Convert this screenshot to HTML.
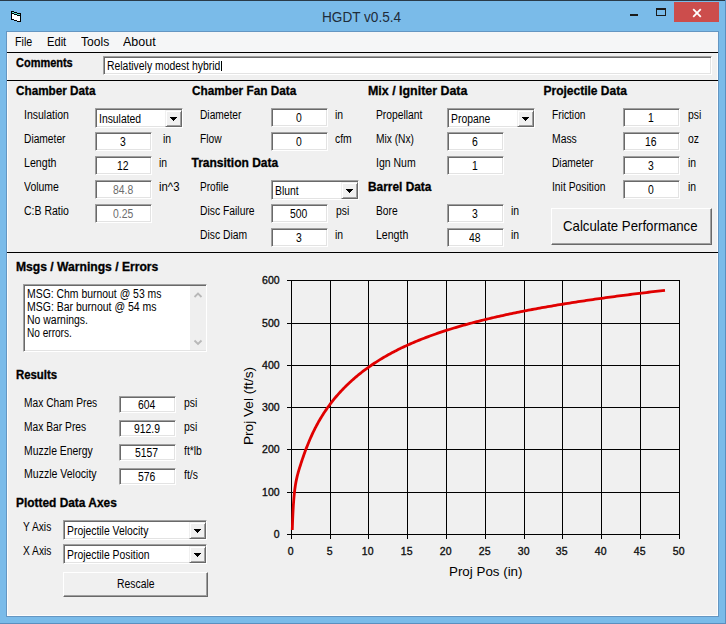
<!DOCTYPE html><html><head><meta charset="utf-8"><style>
html,body{margin:0;padding:0;width:726px;height:624px;overflow:hidden;background:#7abbe9}
body{position:relative;font-family:"Liberation Sans", sans-serif}
.t{position:absolute;white-space:pre;transform-origin:0 0}
.tb{position:absolute;box-sizing:border-box;border:1px solid;border-color:#a0a0a0 #fff #fff #a0a0a0;box-shadow:inset 1px 1px #696969,inset -1px -1px #e3e3e3;background:#fff}
.btn{position:absolute;box-sizing:border-box;border:1px solid;border-color:#f0f0f0 #696969 #696969 #f0f0f0;box-shadow:inset 1px 1px #fff,inset -1px -1px #a0a0a0;background:#f0f0f0}
.btn2{position:absolute;box-sizing:border-box;border:1px solid;border-color:#fff #696969 #696969 #fff;box-shadow:inset -1px -1px #a0a0a0;background:#f0f0f0}
</style></head><body><div style="position:absolute;left:0;top:0;width:726px;height:624px;background:#7abbe9"></div>
<div style="position:absolute;left:0;top:0;width:726px;height:1px;background:#2a3a48"></div>
<div style="position:absolute;left:0;top:623px;width:726px;height:1px;background:#5a8fbf"></div>
<div style="position:absolute;left:725px;top:0;width:1px;height:624px;background:#5a8fbf"></div>
<div style="position:absolute;left:674px;top:2px;width:45px;height:20px;background:#cc4d4c"></div>
<svg style="position:absolute;left:0;top:0" width="726" height="40"><path d="M693.2 9.2 L700.8 16.8 M700.8 9.2 L693.2 16.8" stroke="#fff" stroke-width="1.8"/><rect x="630" y="14" width="8" height="2" fill="#1b1b1b"/><rect x="656.5" y="8.5" width="9" height="7" fill="none" stroke="#1b1b1b" stroke-width="1"/><rect x="656" y="8" width="10" height="2" fill="#1b1b1b"/><path d="M11 11 H14 V12 H17 V13 H21 V22 H17 V21 H14 V20 H11 Z" fill="#000"/><path d="M12 14 H14 V15 H17 V16 H20 V21 H17 V20 H14 V19 H12 Z" fill="#fff"/><path d="M12 12 H14 V13 H17 V14 H20 V15 H17 V14 H14 V13 H12 Z" fill="#5fe0d0"/></svg>
<div style="position:absolute;left:6px;top:31px;width:713px;height:586px;background:#6496c2"></div>
<div style="position:absolute;left:7px;top:32px;width:711px;height:584px;background:#fdfdfd"></div>
<div style="position:absolute;left:8px;top:32px;width:709px;height:583px;background:#f0f0f0"></div>
<div style="position:absolute;left:7px;top:32px;width:711px;height:20px;background:#f5f6f7"></div>
<div style="position:absolute;left:7px;top:52px;width:711px;height:1px;background:#000"></div>
<div style="position:absolute;left:7px;top:80px;width:711px;height:1px;background:#000"></div>
<div style="position:absolute;left:7px;top:252px;width:711px;height:1px;background:#000"></div>
<div class="tb" style="left:103px;top:56px;width:609px;height:19px;background:#fff"></div>
<div style="position:absolute;left:221px;top:61px;width:1px;height:10px;background:#000"></div>
<div class="tb" style="left:95px;top:132px;width:57px;height:19px;background:#fff"></div>
<div class="tb" style="left:95px;top:156px;width:57px;height:19px;background:#fff"></div>
<div class="tb" style="left:95px;top:180px;width:57px;height:19px;background:#fff"></div>
<div class="tb" style="left:95px;top:204px;width:57px;height:19px;background:#fff"></div>
<div class="tb" style="left:271px;top:108px;width:57px;height:19px;background:#fff"></div>
<div class="tb" style="left:271px;top:132px;width:57px;height:19px;background:#fff"></div>
<div class="tb" style="left:271px;top:204px;width:57px;height:19px;background:#fff"></div>
<div class="tb" style="left:271px;top:228px;width:57px;height:19px;background:#fff"></div>
<div class="tb" style="left:447px;top:132px;width:57px;height:19px;background:#fff"></div>
<div class="tb" style="left:447px;top:156px;width:57px;height:19px;background:#fff"></div>
<div class="tb" style="left:447px;top:204px;width:57px;height:19px;background:#fff"></div>
<div class="tb" style="left:447px;top:228px;width:57px;height:19px;background:#fff"></div>
<div class="tb" style="left:623px;top:108px;width:57px;height:19px;background:#fff"></div>
<div class="tb" style="left:623px;top:132px;width:57px;height:19px;background:#fff"></div>
<div class="tb" style="left:623px;top:156px;width:57px;height:19px;background:#fff"></div>
<div class="tb" style="left:623px;top:180px;width:57px;height:19px;background:#fff"></div>
<div class="tb" style="left:119px;top:396px;width:57px;height:17px;background:#fff"></div>
<div class="tb" style="left:119px;top:420px;width:57px;height:17px;background:#fff"></div>
<div class="tb" style="left:119px;top:444px;width:57px;height:17px;background:#fff"></div>
<div class="tb" style="left:119px;top:468px;width:57px;height:17px;background:#fff"></div>
<div class="tb" style="left:95px;top:108px;width:88px;height:20px"></div>
<div class="btn" style="left:165px;top:110px;width:17px;height:17px"></div>
<svg style="position:absolute;left:165px;top:110px" width="17" height="17"><path d="M5 7 H12 V8 H11 V9 H10 V10 H9 V11 H8 V10 H7 V9 H6 V8 H5 Z" fill="#000"/></svg>
<div class="tb" style="left:271px;top:180px;width:88px;height:20px"></div>
<div class="btn" style="left:341px;top:182px;width:17px;height:17px"></div>
<svg style="position:absolute;left:341px;top:182px" width="17" height="17"><path d="M5 7 H12 V8 H11 V9 H10 V10 H9 V11 H8 V10 H7 V9 H6 V8 H5 Z" fill="#000"/></svg>
<div class="tb" style="left:447px;top:108px;width:88px;height:20px"></div>
<div class="btn" style="left:517px;top:110px;width:17px;height:17px"></div>
<svg style="position:absolute;left:517px;top:110px" width="17" height="17"><path d="M5 7 H12 V8 H11 V9 H10 V10 H9 V11 H8 V10 H7 V9 H6 V8 H5 Z" fill="#000"/></svg>
<div class="tb" style="left:63px;top:520px;width:144px;height:20px"></div>
<div class="btn" style="left:189px;top:522px;width:17px;height:17px"></div>
<svg style="position:absolute;left:189px;top:522px" width="17" height="17"><path d="M5 7 H12 V8 H11 V9 H10 V10 H9 V11 H8 V10 H7 V9 H6 V8 H5 Z" fill="#000"/></svg>
<div class="tb" style="left:63px;top:544px;width:144px;height:20px"></div>
<div class="btn" style="left:189px;top:546px;width:17px;height:17px"></div>
<svg style="position:absolute;left:189px;top:546px" width="17" height="17"><path d="M5 7 H12 V8 H11 V9 H10 V10 H9 V11 H8 V10 H7 V9 H6 V8 H5 Z" fill="#000"/></svg>
<div class="btn2" style="left:551px;top:208px;width:161px;height:37px"></div>
<div class="btn2" style="left:63px;top:572px;width:145px;height:25px"></div>
<div class="tb" style="left:23px;top:284px;width:184px;height:68px"></div>
<div style="position:absolute;left:190px;top:286px;width:16px;height:64px;background:#efefef"></div>
<svg style="position:absolute;left:190px;top:286px" width="16" height="64"><path d="M4.5 11 L8 7.5 L11.5 11 M4.5 54.5 L8 58 L11.5 54.5" stroke="#b8b8b8" stroke-width="1.8" fill="none"/></svg>
<svg style="position:absolute;left:0;top:0" width="726" height="624"><rect x="291" y="280" width="1" height="259" fill="#000"/><rect x="330" y="280" width="1" height="259" fill="#000"/><rect x="368" y="280" width="1" height="259" fill="#000"/><rect x="407" y="280" width="1" height="259" fill="#000"/><rect x="446" y="280" width="1" height="259" fill="#000"/><rect x="485" y="280" width="1" height="259" fill="#000"/><rect x="524" y="280" width="1" height="259" fill="#000"/><rect x="562" y="280" width="1" height="259" fill="#000"/><rect x="601" y="280" width="1" height="259" fill="#000"/><rect x="640" y="280" width="1" height="259" fill="#000"/><rect x="679" y="280" width="1" height="259" fill="#000"/><rect x="287" y="534" width="393" height="1" fill="#000"/><rect x="287" y="492" width="393" height="1" fill="#000"/><rect x="287" y="449" width="393" height="1" fill="#000"/><rect x="287" y="407" width="393" height="1" fill="#000"/><rect x="287" y="365" width="393" height="1" fill="#000"/><rect x="287" y="323" width="393" height="1" fill="#000"/><rect x="287" y="280" width="393" height="1" fill="#000"/><polyline points="292.28,529.93 292.39,526.50 292.51,523.16 292.63,519.91 292.77,516.76 292.91,513.72 293.06,510.80 293.22,507.98 293.38,505.29 293.56,502.71 293.74,500.26 293.92,497.92 294.12,495.71 294.32,493.63 294.53,491.67 294.75,489.83 294.98,488.10 295.21,486.46 295.45,484.91 295.70,483.43 295.95,482.02 296.22,480.67 296.49,479.36 296.77,478.10 297.05,476.88 297.35,475.68 297.65,474.51 297.96,473.36 298.27,472.22 298.60,471.09 298.93,469.97 299.27,468.85 299.61,467.72 299.97,466.60 300.33,465.46 300.70,464.31 301.07,463.15 301.46,461.98 301.85,460.79 302.25,459.60 302.66,458.40 303.07,457.19 303.49,455.98 303.92,454.76 304.36,453.53 304.81,452.31 305.26,451.08 305.72,449.84 306.18,448.61 306.66,447.37 307.14,446.14 307.63,444.90 308.13,443.67 308.64,442.44 309.15,441.21 309.67,439.98 310.20,438.76 310.73,437.54 311.28,436.32 311.83,435.11 312.38,433.90 312.95,432.70 313.52,431.51 314.10,430.32 314.69,429.13 315.29,427.96 315.89,426.79 316.50,425.63 317.12,424.48 317.75,423.33 318.38,422.19 319.02,421.06 319.67,419.94 320.33,418.82 320.99,417.71 321.66,416.61 322.34,415.52 323.03,414.43 323.72,413.35 324.43,412.28 325.13,411.21 325.85,410.15 326.58,409.10 327.31,408.05 328.05,407.01 328.80,405.98 329.55,404.96 330.31,403.94 331.08,402.93 331.86,401.92 332.64,400.92 333.44,399.93 334.24,398.94 335.04,397.97 335.86,396.99 336.68,396.03 337.51,395.07 338.35,394.11 339.20,393.17 340.05,392.23 340.91,391.29 341.78,390.36 342.65,389.44 343.54,388.52 344.43,387.61 345.33,386.71 346.23,385.81 347.15,384.92 348.07,384.04 349.00,383.16 349.93,382.28 350.88,381.41 351.83,380.55 352.79,379.70 353.75,378.85 354.73,378.00 355.71,377.16 356.70,376.33 357.69,375.50 358.70,374.68 359.71,373.87 360.73,373.06 361.76,372.25 362.79,371.45 363.83,370.66 364.88,369.87 365.94,369.09 367.00,368.31 368.08,367.54 369.16,366.78 370.24,366.02 371.34,365.26 372.44,364.51 373.55,363.77 374.67,363.03 375.79,362.30 376.93,361.57 378.07,360.85 379.21,360.13 380.37,359.42 381.53,358.71 382.70,358.01 383.88,357.31 385.07,356.62 386.26,355.94 387.46,355.26 388.67,354.58 389.89,353.91 391.11,353.25 392.34,352.59 393.58,351.93 394.82,351.28 396.08,350.64 397.34,350.00 398.61,349.36 399.88,348.73 401.17,348.11 402.46,347.49 403.76,346.88 405.07,346.27 406.38,345.66 407.70,345.06 409.03,344.46 410.37,343.87 411.71,343.29 413.06,342.70 414.42,342.13 415.79,341.55 417.17,340.98 418.55,340.42 419.94,339.86 421.34,339.30 422.74,338.75 424.15,338.20 425.57,337.66 427.00,337.12 428.44,336.58 429.88,336.05 431.33,335.52 432.79,335.00 434.25,334.47 435.72,333.96 437.21,333.44 438.69,332.93 440.19,332.43 441.69,331.93 443.20,331.43 444.72,330.93 446.25,330.44 447.78,329.95 449.32,329.47 450.87,328.98 452.43,328.51 453.99,328.03 455.56,327.56 457.14,327.09 458.73,326.62 460.32,326.16 461.92,325.70 463.53,325.24 465.15,324.79 466.77,324.34 468.40,323.89 470.04,323.45 471.69,323.01 473.34,322.57 475.01,322.13 476.68,321.70 478.35,321.27 480.04,320.84 481.73,320.41 483.43,319.99 485.14,319.57 486.85,319.15 488.57,318.74 490.30,318.33 492.04,317.92 493.79,317.51 495.54,317.11 497.30,316.71 499.07,316.31 500.84,315.91 502.63,315.51 504.42,315.12 506.21,314.73 508.02,314.34 509.83,313.96 511.65,313.57 513.48,313.19 515.32,312.82 517.16,312.44 519.01,312.06 520.87,311.69 522.74,311.32 524.61,310.95 526.49,310.59 528.38,310.22 530.28,309.86 532.18,309.50 534.09,309.14 536.01,308.79 537.94,308.43 539.87,308.08 541.81,307.73 543.76,307.38 545.72,307.04 547.68,306.69 549.66,306.35 551.64,306.01 553.62,305.67 555.62,305.33 557.62,304.99 559.63,304.66 561.65,304.33 563.67,304.00 565.70,303.67 567.74,303.34 569.79,303.02 571.85,302.69 573.91,302.37 575.98,302.05 578.06,301.73 580.14,301.41 582.24,301.10 584.34,300.78 586.44,300.47 588.56,300.16 590.68,299.85 592.81,299.54 594.95,299.23 597.10,298.92 599.25,298.62 601.41,298.32 603.58,298.02 605.76,297.72 607.94,297.42 610.13,297.12 612.33,296.82 614.54,296.53 616.75,296.23 618.97,295.94 621.20,295.65 623.44,295.36 625.68,295.07 627.93,294.78 630.19,294.50 632.46,294.21 634.73,293.93 637.02,293.65 639.31,293.37 641.60,293.09 643.91,292.81 646.22,292.53 648.54,292.25 650.87,291.98 653.20,291.70 655.54,291.43 657.89,291.15 660.25,290.88 662.62,290.61 664.99,290.34" fill="none" stroke="#e00000" stroke-width="2.8" stroke-linejoin="round"/></svg>
<span class="t" style="left:322.30px;top:9.18px;font-size:15.5px;line-height:15.5px;font-weight:normal;color:#1e2c39;transform:scaleX(0.8768);">HGDT v0.5.4</span>
<span class="t" style="left:14.60px;top:35.84px;font-size:12px;line-height:12px;font-weight:normal;color:#000;transform:scaleX(0.8895);">File</span>
<span class="t" style="left:46.50px;top:35.84px;font-size:12px;line-height:12px;font-weight:normal;color:#000;transform:scaleX(0.9285);">Edit</span>
<span class="t" style="left:80.70px;top:35.84px;font-size:12px;line-height:12px;font-weight:normal;color:#000;transform:scaleX(1.0067);">Tools</span>
<span class="t" style="left:123.00px;top:35.84px;font-size:12px;line-height:12px;font-weight:normal;color:#000;transform:scaleX(1.0396);">About</span>
<span class="t" style="left:15.50px;top:56.84px;font-size:12px;line-height:12px;font-weight:bold;color:#000;transform:scaleX(0.9144);-webkit-text-stroke:0.3px #000;">Comments</span>
<span class="t" style="left:106.60px;top:60.04px;font-size:12px;line-height:12px;font-weight:normal;color:#000;transform:scaleX(0.8675);">Relatively modest hybrid</span>
<span class="t" style="left:15.50px;top:84.84px;font-size:12px;line-height:12px;font-weight:bold;color:#000;transform:scaleX(0.9772);-webkit-text-stroke:0.3px #000;">Chamber Data</span>
<span class="t" style="left:191.50px;top:84.84px;font-size:12px;line-height:12px;font-weight:bold;color:#000;transform:scaleX(0.9837);-webkit-text-stroke:0.3px #000;">Chamber Fan Data</span>
<span class="t" style="left:367.50px;top:84.84px;font-size:12px;line-height:12px;font-weight:bold;color:#000;transform:scaleX(1.0352);-webkit-text-stroke:0.3px #000;">Mix / Igniter Data</span>
<span class="t" style="left:543.50px;top:84.84px;font-size:12px;line-height:12px;font-weight:bold;color:#000;-webkit-text-stroke:0.3px #000;">Projectile Data</span>
<span class="t" style="left:191.50px;top:156.84px;font-size:12px;line-height:12px;font-weight:bold;color:#000;-webkit-text-stroke:0.3px #000;">Transition Data</span>
<span class="t" style="left:367.50px;top:180.84px;font-size:12px;line-height:12px;font-weight:bold;color:#000;transform:scaleX(0.9901);-webkit-text-stroke:0.3px #000;">Barrel Data</span>
<span class="t" style="left:15.80px;top:260.84px;font-size:12px;line-height:12px;font-weight:bold;color:#000;transform:scaleX(1.0098);-webkit-text-stroke:0.3px #000;">Msgs / Warnings / Errors</span>
<span class="t" style="left:15.80px;top:369.24px;font-size:12px;line-height:12px;font-weight:bold;color:#000;transform:scaleX(0.9481);-webkit-text-stroke:0.3px #000;">Results</span>
<span class="t" style="left:15.80px;top:497.24px;font-size:12px;line-height:12px;font-weight:bold;color:#000;transform:scaleX(0.9919);-webkit-text-stroke:0.3px #000;">Plotted Data Axes</span>
<span class="t" style="left:23.50px;top:108.84px;font-size:12px;line-height:12px;font-weight:normal;color:#000;transform:scaleX(0.8741);">Insulation</span>
<span class="t" style="left:23.50px;top:132.84px;font-size:12px;line-height:12px;font-weight:normal;color:#000;transform:scaleX(0.8525);">Diameter</span>
<span class="t" style="left:23.50px;top:156.84px;font-size:12px;line-height:12px;font-weight:normal;color:#000;transform:scaleX(0.8855);">Length</span>
<span class="t" style="left:23.50px;top:180.84px;font-size:12px;line-height:12px;font-weight:normal;color:#000;transform:scaleX(0.8719);">Volume</span>
<span class="t" style="left:23.50px;top:204.84px;font-size:12px;line-height:12px;font-weight:normal;color:#000;transform:scaleX(0.8744);">C:B Ratio</span>
<span class="t" style="left:199.60px;top:108.84px;font-size:12px;line-height:12px;font-weight:normal;color:#000;transform:scaleX(0.8505);">Diameter</span>
<span class="t" style="left:199.60px;top:132.84px;font-size:12px;line-height:12px;font-weight:normal;color:#000;transform:scaleX(0.8525);">Flow</span>
<span class="t" style="left:199.60px;top:180.84px;font-size:12px;line-height:12px;font-weight:normal;color:#000;transform:scaleX(0.8408);">Profile</span>
<span class="t" style="left:199.60px;top:204.84px;font-size:12px;line-height:12px;font-weight:normal;color:#000;transform:scaleX(0.8619);">Disc Failure</span>
<span class="t" style="left:199.60px;top:228.84px;font-size:12px;line-height:12px;font-weight:normal;color:#000;transform:scaleX(0.8616);">Disc Diam</span>
<span class="t" style="left:375.60px;top:108.84px;font-size:12px;line-height:12px;font-weight:normal;color:#000;transform:scaleX(0.8587);">Propellant</span>
<span class="t" style="left:375.60px;top:132.84px;font-size:12px;line-height:12px;font-weight:normal;color:#000;transform:scaleX(0.8510);">Mix (Nx)</span>
<span class="t" style="left:375.60px;top:156.84px;font-size:12px;line-height:12px;font-weight:normal;color:#000;transform:scaleX(0.8754);">Ign Num</span>
<span class="t" style="left:375.60px;top:204.84px;font-size:12px;line-height:12px;font-weight:normal;color:#000;transform:scaleX(0.8521);">Bore</span>
<span class="t" style="left:375.60px;top:228.84px;font-size:12px;line-height:12px;font-weight:normal;color:#000;transform:scaleX(0.8800);">Length</span>
<span class="t" style="left:551.60px;top:108.84px;font-size:12px;line-height:12px;font-weight:normal;color:#000;transform:scaleX(0.8516);">Friction</span>
<span class="t" style="left:551.60px;top:132.84px;font-size:12px;line-height:12px;font-weight:normal;color:#000;transform:scaleX(0.8650);">Mass</span>
<span class="t" style="left:551.60px;top:156.84px;font-size:12px;line-height:12px;font-weight:normal;color:#000;transform:scaleX(0.8505);">Diameter</span>
<span class="t" style="left:551.60px;top:180.84px;font-size:12px;line-height:12px;font-weight:normal;color:#000;transform:scaleX(0.8608);">Init Position</span>
<span class="t" style="left:23.60px;top:396.84px;font-size:12px;line-height:12px;font-weight:normal;color:#000;transform:scaleX(0.8510);">Max Cham Pres</span>
<span class="t" style="left:23.60px;top:420.84px;font-size:12px;line-height:12px;font-weight:normal;color:#000;transform:scaleX(0.8557);">Max Bar Pres</span>
<span class="t" style="left:23.60px;top:444.84px;font-size:12px;line-height:12px;font-weight:normal;color:#000;transform:scaleX(0.8669);">Muzzle Energy</span>
<span class="t" style="left:23.60px;top:468.14px;font-size:12px;line-height:12px;font-weight:normal;color:#000;transform:scaleX(0.8779);">Muzzle Velocity</span>
<span class="t" style="left:23.00px;top:521.34px;font-size:12px;line-height:12px;font-weight:normal;color:#000;transform:scaleX(0.8527);">Y Axis</span>
<span class="t" style="left:23.00px;top:545.04px;font-size:12px;line-height:12px;font-weight:normal;color:#000;transform:scaleX(0.8527);">X Axis</span>
<span class="t" style="left:162.50px;top:133.24px;font-size:12px;line-height:12px;font-weight:normal;color:#000;transform:scaleX(0.8650);">in</span>
<span class="t" style="left:159.30px;top:157.24px;font-size:12px;line-height:12px;font-weight:normal;color:#000;transform:scaleX(0.8650);">in</span>
<span class="t" style="left:159.30px;top:181.24px;font-size:12px;line-height:12px;font-weight:normal;color:#000;transform:scaleX(0.9471);">in^3</span>
<span class="t" style="left:334.80px;top:109.24px;font-size:12px;line-height:12px;font-weight:normal;color:#000;transform:scaleX(0.8650);">in</span>
<span class="t" style="left:335.00px;top:133.24px;font-size:12px;line-height:12px;font-weight:normal;color:#000;transform:scaleX(0.8650);">cfm</span>
<span class="t" style="left:335.50px;top:205.24px;font-size:12px;line-height:12px;font-weight:normal;color:#000;transform:scaleX(0.8650);">psi</span>
<span class="t" style="left:335.00px;top:229.24px;font-size:12px;line-height:12px;font-weight:normal;color:#000;transform:scaleX(0.8650);">in</span>
<span class="t" style="left:510.80px;top:205.24px;font-size:12px;line-height:12px;font-weight:normal;color:#000;transform:scaleX(0.8650);">in</span>
<span class="t" style="left:510.80px;top:229.24px;font-size:12px;line-height:12px;font-weight:normal;color:#000;transform:scaleX(0.8650);">in</span>
<span class="t" style="left:687.50px;top:109.24px;font-size:12px;line-height:12px;font-weight:normal;color:#000;transform:scaleX(0.8650);">psi</span>
<span class="t" style="left:687.50px;top:133.24px;font-size:12px;line-height:12px;font-weight:normal;color:#000;transform:scaleX(0.8650);">oz</span>
<span class="t" style="left:687.50px;top:157.24px;font-size:12px;line-height:12px;font-weight:normal;color:#000;transform:scaleX(0.8650);">in</span>
<span class="t" style="left:687.50px;top:181.24px;font-size:12px;line-height:12px;font-weight:normal;color:#000;transform:scaleX(0.8650);">in</span>
<span class="t" style="left:183.60px;top:397.24px;font-size:12px;line-height:12px;font-weight:normal;color:#000;transform:scaleX(0.8650);">psi</span>
<span class="t" style="left:183.60px;top:421.24px;font-size:12px;line-height:12px;font-weight:normal;color:#000;transform:scaleX(0.8650);">psi</span>
<span class="t" style="left:183.60px;top:445.24px;font-size:12px;line-height:12px;font-weight:normal;color:#000;transform:scaleX(0.8650);">ft*lb</span>
<span class="t" style="left:183.60px;top:468.54px;font-size:12px;line-height:12px;font-weight:normal;color:#000;transform:scaleX(0.8650);">ft/s</span>
<span class="t" style="left:120.11px;top:135.64px;font-size:12px;line-height:12px;font-weight:normal;color:#000;transform:scaleX(0.8650);">3</span>
<span class="t" style="left:117.23px;top:159.64px;font-size:12px;line-height:12px;font-weight:normal;color:#000;transform:scaleX(0.8650);">12</span>
<span class="t" style="left:112.90px;top:183.64px;font-size:12px;line-height:12px;font-weight:normal;color:#6d6d6d;transform:scaleX(0.8650);">84.8</span>
<span class="t" style="left:112.90px;top:207.64px;font-size:12px;line-height:12px;font-weight:normal;color:#6d6d6d;transform:scaleX(0.8650);">0.25</span>
<span class="t" style="left:296.11px;top:111.64px;font-size:12px;line-height:12px;font-weight:normal;color:#000;transform:scaleX(0.8650);">0</span>
<span class="t" style="left:296.11px;top:135.64px;font-size:12px;line-height:12px;font-weight:normal;color:#000;transform:scaleX(0.8650);">0</span>
<span class="t" style="left:290.34px;top:207.64px;font-size:12px;line-height:12px;font-weight:normal;color:#000;transform:scaleX(0.8650);">500</span>
<span class="t" style="left:296.11px;top:231.64px;font-size:12px;line-height:12px;font-weight:normal;color:#000;transform:scaleX(0.8650);">3</span>
<span class="t" style="left:472.11px;top:135.64px;font-size:12px;line-height:12px;font-weight:normal;color:#000;transform:scaleX(0.8650);">6</span>
<span class="t" style="left:472.11px;top:159.64px;font-size:12px;line-height:12px;font-weight:normal;color:#000;transform:scaleX(0.8650);">1</span>
<span class="t" style="left:472.11px;top:207.64px;font-size:12px;line-height:12px;font-weight:normal;color:#000;transform:scaleX(0.8650);">3</span>
<span class="t" style="left:469.23px;top:231.64px;font-size:12px;line-height:12px;font-weight:normal;color:#000;transform:scaleX(0.8650);">48</span>
<span class="t" style="left:648.11px;top:111.64px;font-size:12px;line-height:12px;font-weight:normal;color:#000;transform:scaleX(0.8650);">1</span>
<span class="t" style="left:645.23px;top:135.64px;font-size:12px;line-height:12px;font-weight:normal;color:#000;transform:scaleX(0.8650);">16</span>
<span class="t" style="left:648.11px;top:159.64px;font-size:12px;line-height:12px;font-weight:normal;color:#000;transform:scaleX(0.8650);">3</span>
<span class="t" style="left:648.11px;top:183.64px;font-size:12px;line-height:12px;font-weight:normal;color:#000;transform:scaleX(0.8650);">0</span>
<span class="t" style="left:138.34px;top:399.04px;font-size:12px;line-height:12px;font-weight:normal;color:#000;transform:scaleX(0.8650);">604</span>
<span class="t" style="left:134.01px;top:423.04px;font-size:12px;line-height:12px;font-weight:normal;color:#000;transform:scaleX(0.8650);">912.9</span>
<span class="t" style="left:135.45px;top:447.04px;font-size:12px;line-height:12px;font-weight:normal;color:#000;transform:scaleX(0.8650);">5157</span>
<span class="t" style="left:138.34px;top:471.04px;font-size:12px;line-height:12px;font-weight:normal;color:#000;transform:scaleX(0.8650);">576</span>
<span class="t" style="left:99.00px;top:112.84px;font-size:12px;line-height:12px;font-weight:normal;color:#000;transform:scaleX(0.8650);">Insulated</span>
<span class="t" style="left:275.30px;top:184.84px;font-size:12px;line-height:12px;font-weight:normal;color:#000;transform:scaleX(0.8650);">Blunt</span>
<span class="t" style="left:451.00px;top:112.84px;font-size:12px;line-height:12px;font-weight:normal;color:#000;transform:scaleX(0.8650);">Propane</span>
<span class="t" style="left:67.30px;top:524.84px;font-size:12px;line-height:12px;font-weight:normal;color:#000;transform:scaleX(0.8650);">Projectile Velocity</span>
<span class="t" style="left:67.30px;top:548.84px;font-size:12px;line-height:12px;font-weight:normal;color:#000;transform:scaleX(0.8650);">Projectile Position</span>
<span class="t" style="left:563.30px;top:217.90px;font-size:15px;line-height:15px;font-weight:normal;color:#000;transform:scaleX(0.8822);">Calculate Performance</span>
<span class="t" style="left:117.05px;top:578.14px;font-size:12px;line-height:12px;font-weight:normal;color:#000;transform:scaleX(0.8650);">Rescale</span>
<span class="t" style="left:26.50px;top:287.84px;font-size:12px;line-height:12px;font-weight:normal;color:#000;transform:scaleX(0.8683);">MSG: Chm burnout @ 53 ms</span>
<span class="t" style="left:26.50px;top:300.84px;font-size:12px;line-height:12px;font-weight:normal;color:#000;transform:scaleX(0.8736);">MSG: Bar burnout @ 54 ms</span>
<span class="t" style="left:26.50px;top:313.84px;font-size:12px;line-height:12px;font-weight:normal;color:#000;transform:scaleX(0.8710);">No warnings.</span>
<span class="t" style="left:26.50px;top:326.84px;font-size:12px;line-height:12px;font-weight:normal;color:#000;transform:scaleX(0.8398);">No errors.</span>
<span class="t" style="left:273.76px;top:529.11px;font-size:10.5px;line-height:10.5px;font-weight:normal;color:#111;-webkit-text-stroke:0.35px #111;">0</span>
<span class="t" style="left:262.08px;top:487.11px;font-size:10.5px;line-height:10.5px;font-weight:normal;color:#111;-webkit-text-stroke:0.35px #111;">100</span>
<span class="t" style="left:262.08px;top:444.11px;font-size:10.5px;line-height:10.5px;font-weight:normal;color:#111;-webkit-text-stroke:0.35px #111;">200</span>
<span class="t" style="left:262.08px;top:402.11px;font-size:10.5px;line-height:10.5px;font-weight:normal;color:#111;-webkit-text-stroke:0.35px #111;">300</span>
<span class="t" style="left:262.08px;top:360.11px;font-size:10.5px;line-height:10.5px;font-weight:normal;color:#111;-webkit-text-stroke:0.35px #111;">400</span>
<span class="t" style="left:262.08px;top:318.11px;font-size:10.5px;line-height:10.5px;font-weight:normal;color:#111;-webkit-text-stroke:0.35px #111;">500</span>
<span class="t" style="left:262.08px;top:275.11px;font-size:10.5px;line-height:10.5px;font-weight:normal;color:#111;-webkit-text-stroke:0.35px #111;">600</span>
<span class="t" style="left:287.78px;top:546.11px;font-size:10.5px;line-height:10.5px;font-weight:normal;color:#111;-webkit-text-stroke:0.35px #111;">0</span>
<span class="t" style="left:326.78px;top:546.11px;font-size:10.5px;line-height:10.5px;font-weight:normal;color:#111;-webkit-text-stroke:0.35px #111;">5</span>
<span class="t" style="left:361.86px;top:546.11px;font-size:10.5px;line-height:10.5px;font-weight:normal;color:#111;-webkit-text-stroke:0.35px #111;">10</span>
<span class="t" style="left:400.86px;top:546.11px;font-size:10.5px;line-height:10.5px;font-weight:normal;color:#111;-webkit-text-stroke:0.35px #111;">15</span>
<span class="t" style="left:439.86px;top:546.11px;font-size:10.5px;line-height:10.5px;font-weight:normal;color:#111;-webkit-text-stroke:0.35px #111;">20</span>
<span class="t" style="left:478.86px;top:546.11px;font-size:10.5px;line-height:10.5px;font-weight:normal;color:#111;-webkit-text-stroke:0.35px #111;">25</span>
<span class="t" style="left:517.86px;top:546.11px;font-size:10.5px;line-height:10.5px;font-weight:normal;color:#111;-webkit-text-stroke:0.35px #111;">30</span>
<span class="t" style="left:555.86px;top:546.11px;font-size:10.5px;line-height:10.5px;font-weight:normal;color:#111;-webkit-text-stroke:0.35px #111;">35</span>
<span class="t" style="left:594.86px;top:546.11px;font-size:10.5px;line-height:10.5px;font-weight:normal;color:#111;-webkit-text-stroke:0.35px #111;">40</span>
<span class="t" style="left:633.86px;top:546.11px;font-size:10.5px;line-height:10.5px;font-weight:normal;color:#111;-webkit-text-stroke:0.35px #111;">45</span>
<span class="t" style="left:672.86px;top:546.11px;font-size:10.5px;line-height:10.5px;font-weight:normal;color:#111;-webkit-text-stroke:0.35px #111;">50</span>
<span class="t" style="left:449.40px;top:564.60px;font-size:13px;line-height:13px;font-weight:normal;color:#000;transform:scaleX(1.0277);">Proj Pos (in)</span>
<span class="t" style="left:247.5px;top:406px;font-size:13px;line-height:13px;color:#000;transform:translate(-50%,-50%) rotate(-90deg) scaleX(1.05);transform-origin:center">Proj Vel (ft/s)</span>
</body></html>
